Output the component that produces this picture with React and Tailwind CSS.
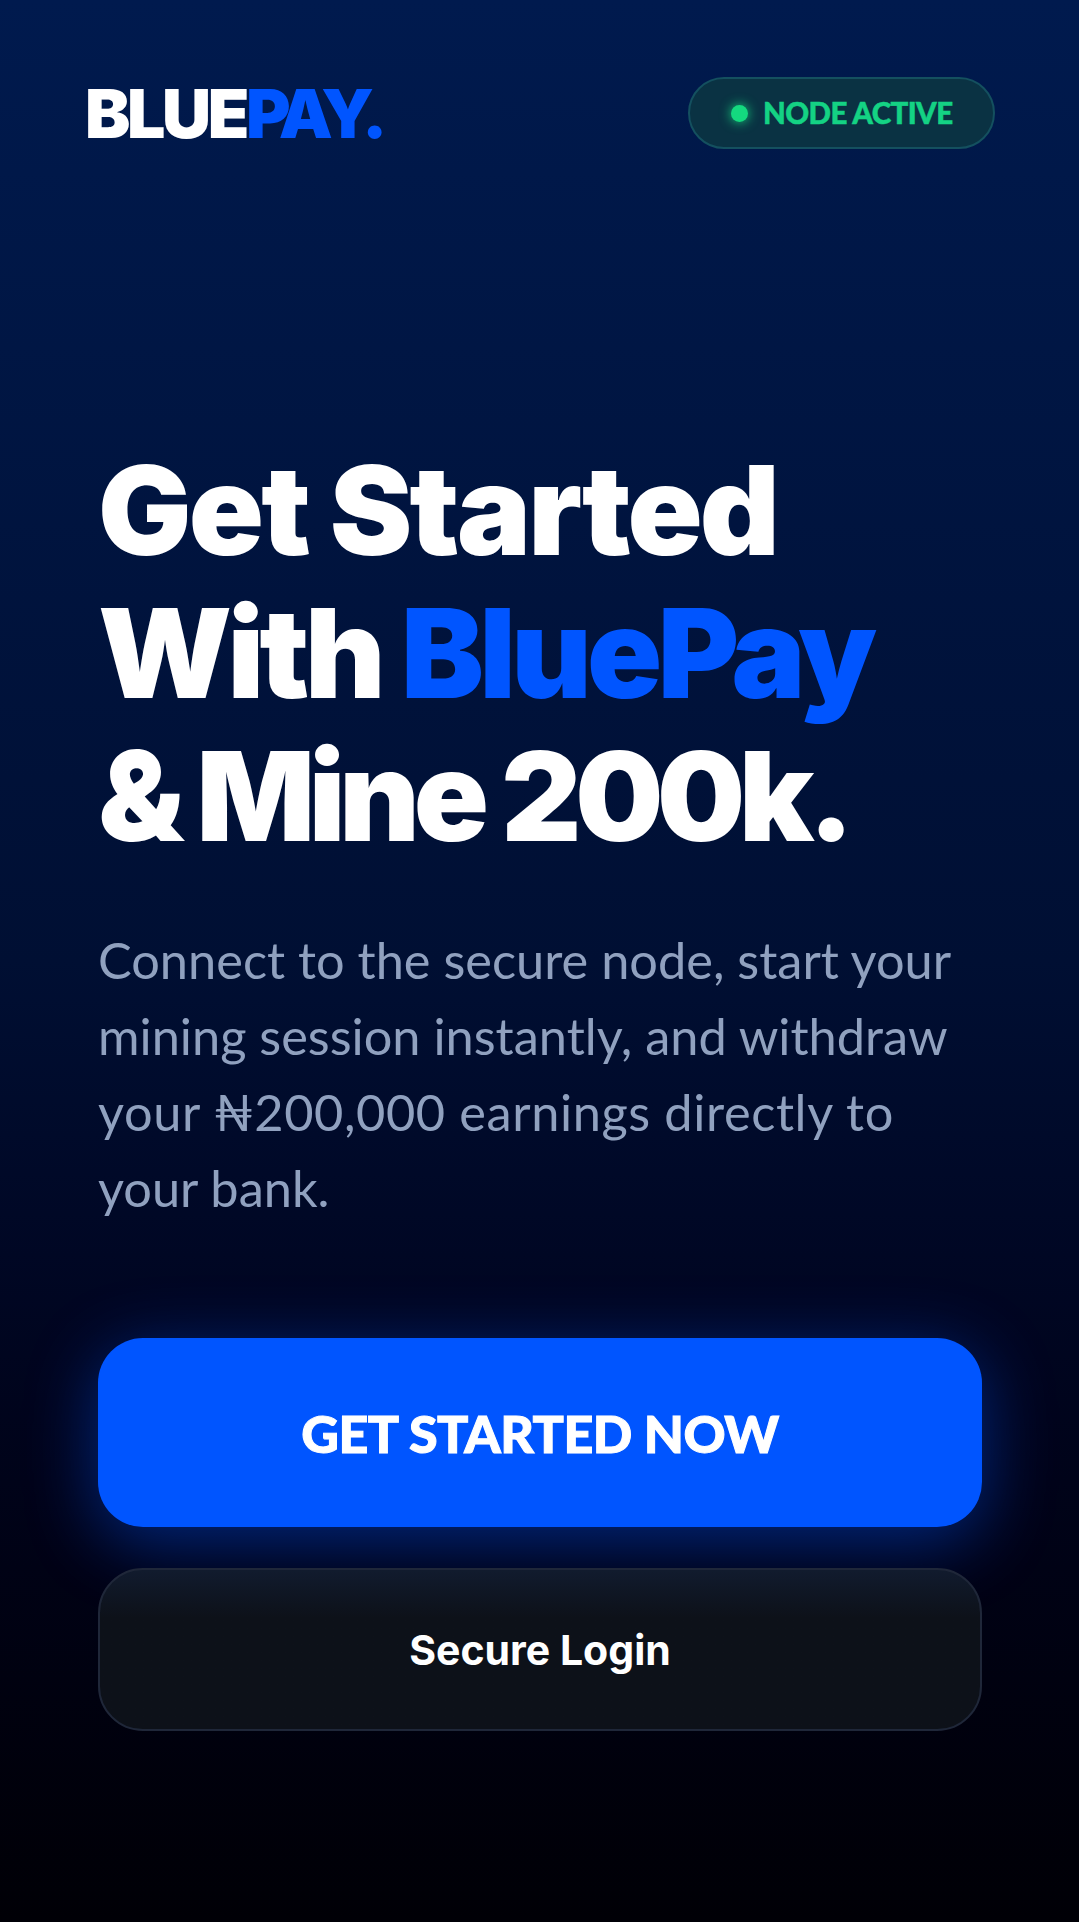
export default function App() {
  return (
    <div className="flex h-[1922px] flex-col overflow-hidden bg-gradient-to-b from-[#001a4e] via-[#000f33] to-[#000006] font-['Lato','Noto_Sans',sans-serif] text-white">
      <header className="flex items-center justify-between pl-[85px] pr-[84px] pt-[77px]">
        <div className="font-['Inter',sans-serif] text-[68px] font-black leading-[72px] tracking-[-0.05em]">
          BLUE<span className="tracking-[-0.085em] text-[#0055ff]">PAY.</span>
        </div>
        <div className="flex h-[72px] w-[307px] items-center gap-[15px] rounded-full border-2 border-[#14505f] bg-[#0a3243] pl-[41px]">
          <span className="h-[17px] w-[17px] rounded-full bg-[#14d97f] shadow-[0_0_12px_#14d97f]" />
          <span className="text-[29.5px] font-black tracking-[-0.02em] text-[#14d284] [-webkit-text-stroke:0.5px_#14d284]">NODE ACTIVE</span>
        </div>
      </header>

      <main className="flex flex-1 flex-col pl-[98px] pr-[97px] pt-[290px]">
        <h1 className="font-['Inter',sans-serif] text-[124px] font-black leading-[143px]">
          <span className="block tracking-[-0.0225em]">Get Started</span>
          <span className="block tracking-[-0.0375em]">
            With <span className="text-[#0055ff]">BluePay</span>
          </span>
          <span className="block tracking-[-0.05em]">&amp; Mine 200k.</span>
        </h1>

        <p className="mt-[54px] text-[50.5px] font-normal leading-[76px] text-[#90a1bf]">
          Connect to the secure node, start your
          <br />
          mining session instantly, and withdraw
          <br />
          <span className="tracking-[0.012em]">your ₦200,000 earnings directly to</span>
          <br />
          your bank.
        </p>

        <button className="mt-[112px] flex h-[189px] w-full items-center justify-center rounded-[45px] bg-[#0055ff] text-[52px] font-black tracking-[-0.01em] text-white shadow-[0_15px_70px_rgba(0,85,255,0.45)] [-webkit-text-stroke:1px_white]">
          GET STARTED NOW
        </button>
        <button className="mt-[41px] flex h-[163px] w-full items-center justify-center rounded-[45px] border-2 border-[#1f2739] bg-gradient-to-b from-[#111b2e] via-[#0d1119] via-30% to-[#0d1119] pt-[3px] font-['Inter',sans-serif] text-[41px] font-bold text-white">
          Secure Login
        </button>
      </main>
    </div>
  )
}
